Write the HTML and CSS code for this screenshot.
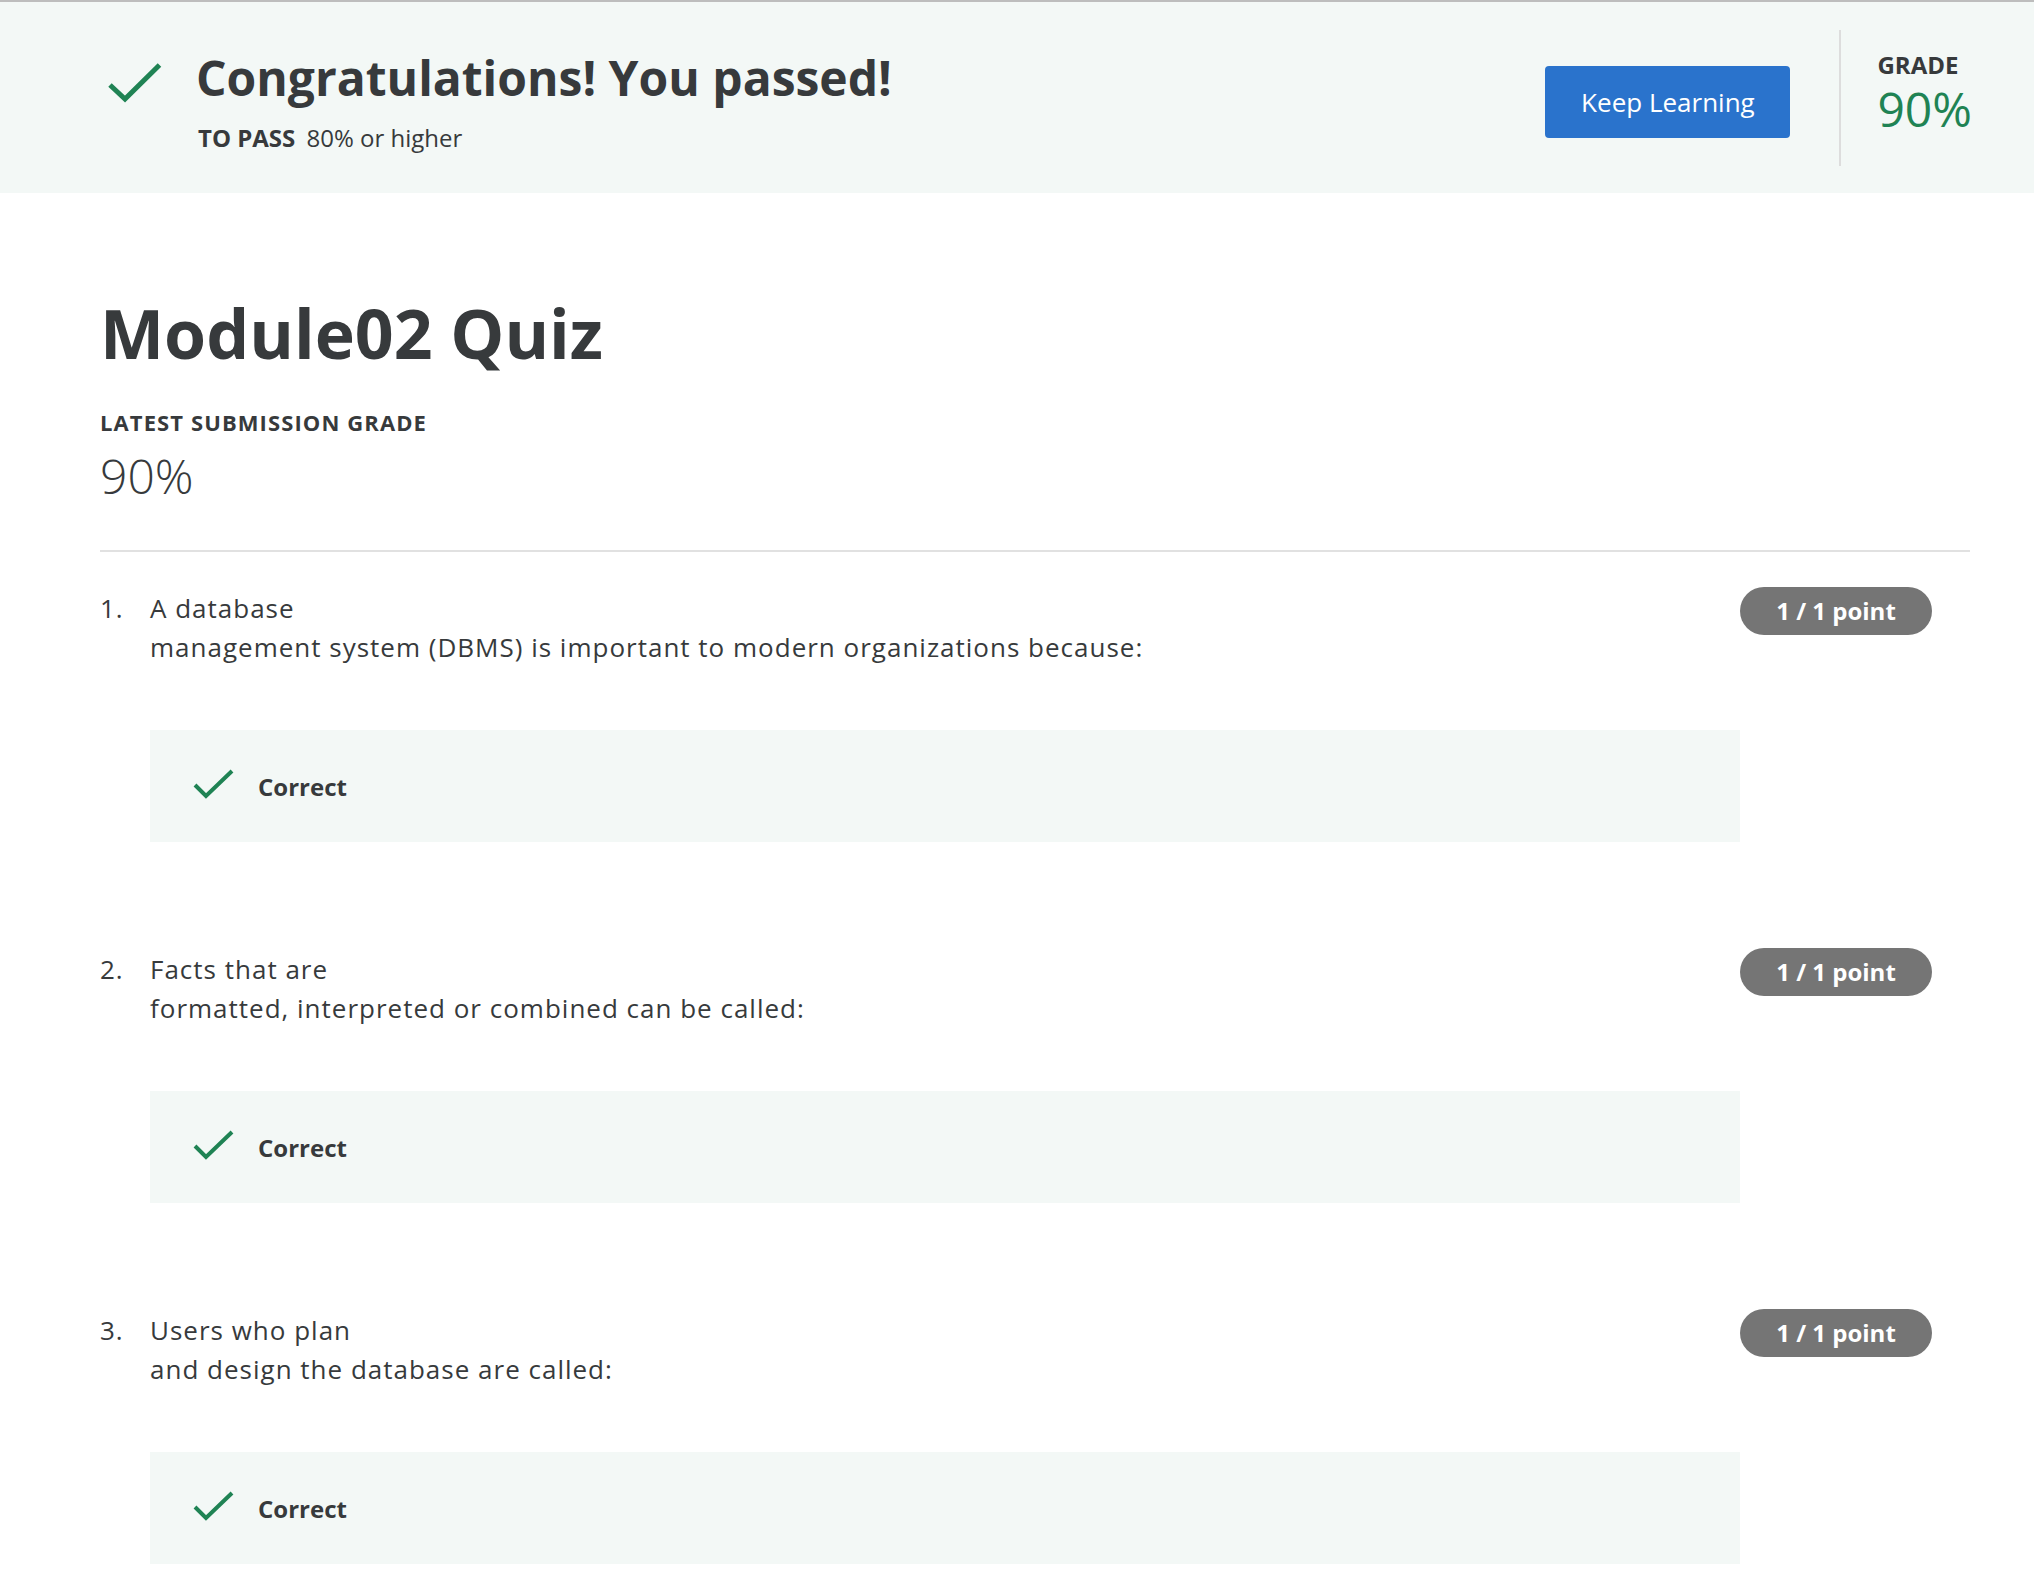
FILE: index.html
```html
<!DOCTYPE html>
<html lang="en">
<head>
<meta charset="utf-8">
<title>Module02 Quiz</title>
<link rel="stylesheet" href="styles.css">
</head>
<body>
<header class="banner">
  <div class="banner-inner">
    <div class="result">
      <svg class="result-check" width="58" height="44" viewBox="0 0 58 44" aria-hidden="true">
        <polyline points="4,24 19,38 53.5,4" fill="none" stroke="#1f8354" stroke-width="5"/>
      </svg>
      <div class="result-text">
        <h2 class="result-title">Congratulations! You passed!</h2>
        <div class="to-pass"><span class="to-pass-label">TO PASS</span> 80% or higher</div>
      </div>
    </div>
    <div class="actions">
      <button class="btn-primary" type="button">Keep Learning</button>
      <div class="grade-box">
        <div class="grade-label">GRADE</div>
        <div class="grade-value">90%</div>
      </div>
    </div>
  </div>
</header>

<main class="content">
  <h1 class="quiz-title">Module02 Quiz</h1>
  <div class="sub-label">LATEST SUBMISSION GRADE</div>
  <div class="score">90%</div>
  <hr class="divider">

  <ol class="questions">
    <li class="question">
      <div class="q-num">1.</div>
      <div class="q-body">
        <p class="q-text">A database<br>management system (DBMS) is important to modern organizations because:</p>
        <div class="feedback">
          <svg class="feedback-check" width="44" height="34" viewBox="0 0 44 34" aria-hidden="true">
            <polyline points="3,16 14,27 40,2" fill="none" stroke="#1f8354" stroke-width="4"/>
          </svg>
          <span class="feedback-text">Correct</span>
        </div>
      </div>
      <div class="points">1 / 1 point</div>
    </li>
    <li class="question">
      <div class="q-num">2.</div>
      <div class="q-body">
        <p class="q-text">Facts that are<br>formatted, interpreted or combined can be called:</p>
        <div class="feedback">
          <svg class="feedback-check" width="44" height="34" viewBox="0 0 44 34" aria-hidden="true">
            <polyline points="3,16 14,27 40,2" fill="none" stroke="#1f8354" stroke-width="4"/>
          </svg>
          <span class="feedback-text">Correct</span>
        </div>
      </div>
      <div class="points">1 / 1 point</div>
    </li>
    <li class="question">
      <div class="q-num">3.</div>
      <div class="q-body">
        <p class="q-text">Users who plan<br>and design the database are called:</p>
        <div class="feedback">
          <svg class="feedback-check" width="44" height="34" viewBox="0 0 44 34" aria-hidden="true">
            <polyline points="3,16 14,27 40,2" fill="none" stroke="#1f8354" stroke-width="4"/>
          </svg>
          <span class="feedback-text">Correct</span>
        </div>
      </div>
      <div class="points">1 / 1 point</div>
    </li>
  </ol>
</main>
</body>
</html>
```

FILE: styles.css
```css
* {
  box-sizing: border-box;
}

body {
  margin: 0;
  font-family: "Open Sans", "Noto Sans", Arial, sans-serif;
  color: #373a3c;
  background: #ffffff;
}

/* ---------- banner ---------- */
.banner {
  border-top: 2px solid #bdbdbd;
  background: #f3f8f6;
  padding: 28px 0 27px;
}

.banner-inner {
  display: flex;
  align-items: center;
  justify-content: space-between;
  margin: 0 62px 0 100px;
  height: 136px;
}

.result {
  display: flex;
  align-items: flex-start;
  margin-top: 8px;
}

.result-check {
  display: block;
  margin: 11px 32px 0 6px;
  flex: none;
}

.result-title {
  margin: 0;
  font-size: 48px;
  line-height: 56px;
  font-weight: 700;
  color: #373a3c;
}

.to-pass {
  margin-top: 16px;
  font-size: 24px;
  line-height: 32px;
  font-weight: 400;
  padding-left: 2px;
}

.to-pass-label {
  font-weight: 700;
  margin-right: 5px;
}

.actions {
  display: flex;
  align-items: center;
  height: 100%;
}

.btn-primary {
  margin-top: 8px;
  width: 245px;
  height: 72px;
  border: none;
  border-radius: 4px;
  background: #2a73cc;
  color: #ffffff;
  font-family: inherit;
  font-size: 26px;
  font-weight: 400;
  padding: 0;
  margin-right: 49px;
}

.grade-box {
  height: 136px;
  border-left: 2px solid #dddddd;
  padding: 0 0 3px 36px;
  display: flex;
  flex-direction: column;
  justify-content: center;
  min-width: 130px;
}

.grade-label {
  font-size: 24px;
  line-height: 24px;
  font-weight: 700;
}

.grade-value {
  font-size: 48px;
  line-height: 64px;
  font-weight: 400;
  color: #1f8354;
}

/* ---------- content ---------- */
.content {
  margin: 0 64px 0 100px;
  padding-top: 98px;
}

.quiz-title {
  margin: 0;
  font-size: 68px;
  line-height: 84px;
  font-weight: 700;
}

.sub-label {
  margin-top: 33px;
  font-size: 22px;
  line-height: 28px;
  font-weight: 700;
  letter-spacing: 1.1px;
}

.score {
  margin-top: 12px;
  font-size: 48px;
  line-height: 56px;
  font-weight: 300;
}

.divider {
  margin: 46px 0 0;
  border: none;
  height: 2px;
  background: #e1e1e1;
}

.questions {
  list-style: none;
  margin: 37px 0 0;
  padding: 0;
}

.question {
  display: flex;
  align-items: flex-start;
  margin-bottom: 108px;
}

.q-num {
  width: 50px;
  flex: none;
  font-size: 26px;
  line-height: 39px;
  letter-spacing: 1px;
}

.q-body {
  flex: 1;
}

.q-text {
  margin: 0;
  font-size: 26px;
  line-height: 39px;
  letter-spacing: 1px;
}

.feedback {
  margin-top: 63px;
  height: 112px;
  background: #f3f8f6;
  display: flex;
  align-items: center;
  padding-left: 42px;
}

.feedback-check {
  display: block;
  flex: none;
  margin-right: 22px;
}

.feedback-text {
  font-size: 24px;
  font-weight: 700;
}

.points {
  flex: none;
  margin: -2px 38px 0 0;
  width: 192px;
  height: 48px;
  border-radius: 24px;
  background: #757575;
  color: #ffffff;
  font-size: 24px;
  font-weight: 700;
  line-height: 48px;
  text-align: center;
  white-space: nowrap;
}
```
